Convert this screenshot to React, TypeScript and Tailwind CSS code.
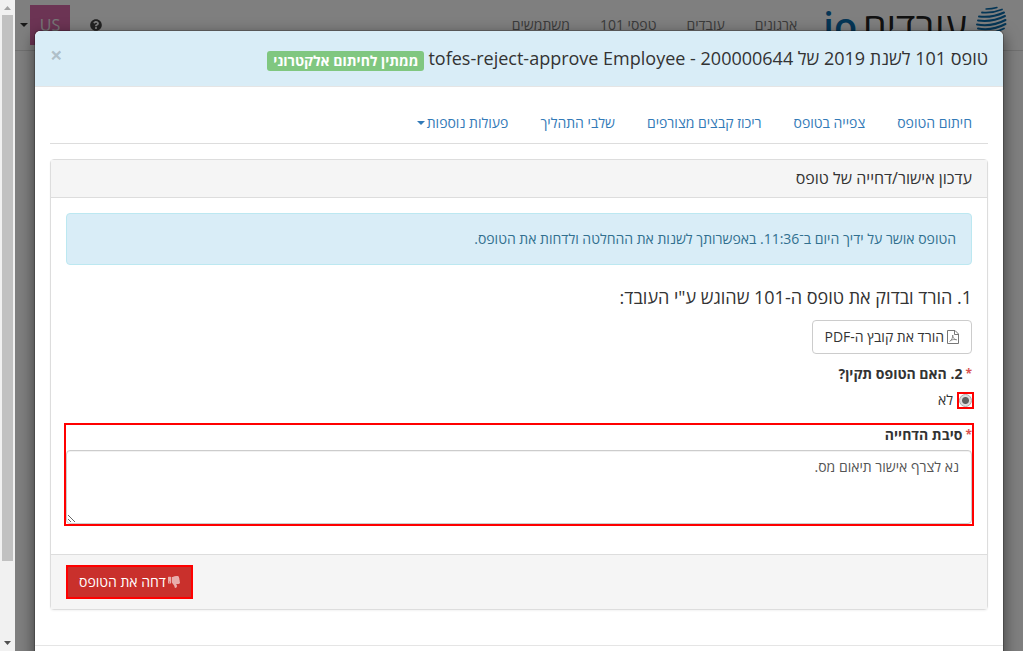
import { useState } from "react";
import { FaQuestionCircle, FaThumbsDown } from "react-icons/fa";

const menu = ["ארגונים", "עובדים", "טפסי 101", "משתמשים"];
const tabs = ["חיתום הטופס", "צפייה בטופס", "ריכוז קבצים מצורפים", "שלבי התהליך"];

function Globe() {
  return (
    <svg width="32" height="32" viewBox="0 0 32 32" fill="none" stroke="#0a6cac" strokeLinecap="round">
      <path d="M11 4 Q17 4 22 2.5" strokeWidth="1.4" />
      <path d="M7 7.5 Q17 8.5 27 4.5" strokeWidth="1.8" />
      <path d="M4 11.5 Q17 13 29 7.5" strokeWidth="2" />
      <path d="M3 15.5 Q17 17.5 30 11" strokeWidth="2" />
      <path d="M2 19.5 Q17 22 30.5 15" strokeWidth="2" />
      <path d="M3 23.5 Q17 26 30.5 19" strokeWidth="2" />
      <path d="M7 27.5 Q18 29 29 23.5" strokeWidth="1.8" />
    </svg>
  );
}

function Caret() {
  return (
    <svg width="8" height="4" viewBox="0 0 8 4" fill="currentColor">
      <path d="M0 0h8L4 4z" />
    </svg>
  );
}

function PdfIcon() {
  return (
    <svg width="12" height="14" viewBox="0 0 12 14" fill="none" stroke="#777">
      <path d="M.5 .5h7.500l3.500 3.500v9.500h-11z" />
      <path d="M7.500 .5v4h4" />
      <path d="M2.500 11.500c2-1 3.500-4 3.200-6.500c0 3 1.500 4.500 4 4.800c-2.500-.6-4.500-.2-6.200 .7" strokeWidth=".8" />
    </svg>
  );
}

function SiteHeader() {
  return (
    <header className="flex h-[51px] items-start border-b border-[#e0e0e0] bg-white pr-4 pl-[5px]">
      <a href="#" className="flex items-start gap-2">
        <span className="pt-[5px]">
          <Globe />
        </span>
        <span className="flex items-start gap-[6px] text-[38px] leading-[50px]">
          <span className="text-[#222]">עובדים</span>
          <span dir="ltr" className="font-semibold text-[#0a6cac]">io</span>
        </span>
      </a>
      <nav className="mr-[26px] flex gap-[30px] pt-[15px] text-sm text-[#777]">
        {menu.map((item) => (
          <a key={item} href="#">
            {item}
          </a>
        ))}
      </nav>
      <div className="mr-auto flex items-start">
        <a href="#" aria-label="עזרה" className="ml-5 pt-[19px] text-[#444]">
          <FaQuestionCircle size={12} />
        </a>
        <button className="flex items-center gap-[2px] pt-[5px]">
          <span className="flex size-10 items-center justify-center bg-[#d868a8] text-base text-[#eee]">US</span>
          <Caret />
        </button>
      </div>
    </header>
  );
}

function ScrollBar() {
  return (
    <div className="flex w-[15px] shrink-0 flex-col items-center justify-between bg-[#f1f1f1]">
      <svg width="15" height="15" viewBox="0 0 15 15" fill="#a3a3a3">
        <path d="M4 10h7L7.500 6z" />
      </svg>
      <div className="flex w-[11px] flex-1 flex-col">
        <div className="h-[88%] bg-[#c1c1c1]" />
      </div>
      <svg width="15" height="15" viewBox="0 0 15 15" fill="#505050">
        <path d="M4 5h7L7.500 9z" />
      </svg>
    </div>
  );
}

function Required() {
  return <span className="text-xs leading-5 font-bold text-[#d9534f]">*</span>;
}

function RejectPanel() {
  const [reason, setReason] = useState("נא לצרף אישור תיאום מס.");

  return (
    <section className="mt-[15px] mb-5 rounded border border-[#ddd] bg-white shadow-xs">
      <h3 className="border-b border-[#ddd] bg-[#f5f5f5] px-[15px] py-[10px] text-base leading-[17px]">
        עדכון אישור/דחייה של טופס
      </h3>
      <div className="p-[15px]">
        <div className="mb-5 rounded border border-[#bce8f1] bg-[#d9edf7] p-[15px] text-[#31708f]">
          הטופס אושר על ידיך היום ב־11:36. באפשרותך לשנות את ההחלטה ולדחות את הטופס.
        </div>
        <h4 className="mb-[10px] text-lg leading-[25px]">1. הורד ובדוק את טופס ה-101 שהוגש ע"י העובד:</h4>
        <button className="flex items-center gap-[3px] rounded border border-[#ccc] bg-white px-3 py-[6px]">
          <PdfIcon />
          הורד את קובץ ה-PDF
        </button>
        <fieldset className="mt-[10px]">
          <legend className="mb-[6px] flex gap-[3px] font-bold">
            <Required /> 2. האם הטופס תקין?
          </legend>
          <label className="flex items-center gap-[6px]">
            <span className="flex outline-2 outline-[#f00]">
              <input
                type="radio"
                name="valid"
                defaultChecked
                className="size-[13px] appearance-none rounded-full border border-[#aaa] bg-[radial-gradient(circle,#606060_3px,#dedede_4px)]"
              />
            </span>
            לא
          </label>
        </fieldset>
        <div className="my-[15px] outline-2 outline-[#f00]">
          <label htmlFor="reason" className="mb-[5px] flex gap-[3px] font-bold">
            <Required /> סיבת הדחייה
          </label>
          <textarea
            id="reason"
            rows={3}
            value={reason}
            onChange={(e) => setReason(e.target.value)}
            className="block w-full rounded border border-[#ccc] px-3 py-[6px] text-[#555] inset-shadow-2xs"
          />
        </div>
      </div>
      <div className="flex justify-end border-t border-[#ddd] bg-[#f5f5f5] px-[15px] py-[10px]">
        <button className="flex items-center gap-[2px] border-2 border-[#f00] bg-[#c9302c] px-[11px] py-[5px] text-white">
          <FaThumbsDown size={12} className="text-white/60" />
          דחה את הטופס
        </button>
      </div>
    </section>
  );
}

export default function App() {
  return (
    <div
      dir="rtl"
      className="flex h-screen overflow-hidden font-['Open_Sans','Noto_Sans',sans-serif] text-sm leading-5 text-[#333]"
    >
      <div className="relative min-w-0 flex-1 overflow-hidden bg-white">
        <SiteHeader />
        <div className="absolute inset-0 overflow-hidden bg-black/50">
          <div
            role="dialog"
            aria-labelledby="title"
            className="mx-[19px] mt-[30px] rounded-md border border-black/20 bg-white bg-clip-padding shadow-[0_5px_15px_rgba(0,0,0,0.5)]"
          >
            <div className="flex items-start justify-between rounded-t-md border-b border-[#e5e5e5] bg-[#d9edf7] p-[15px]">
              <h2 id="title" className="flex items-end gap-1 text-lg leading-[25px]">
                <span>טופס 101 לשנת 2019 של tofes-reject-approve Employee - 200000644</span>
                <span className="rounded-[3px] bg-[#80c780] px-[6px] text-sm leading-5 font-bold text-white">
                  ממתין לחיתום אלקטרוני
                </span>
              </h2>
              <button aria-label="סגירה" className="text-[22px] leading-4 font-bold text-black/20">
                ×
              </button>
            </div>
            <div className="p-[15px]">
              <nav className="flex border-b border-[#ddd] text-[#337ab7]">
                {tabs.map((tab) => (
                  <a key={tab} href="#" className="px-4 pt-[11px] pb-[10px]">
                    {tab}
                  </a>
                ))}
                <a href="#" className="flex items-center gap-[2px] px-4 pt-[11px] pb-[10px]">
                  פעולות נוספות
                  <Caret />
                </a>
              </nav>
              <RejectPanel />
            </div>
            <div className="h-16 border-t border-[#e5e5e5]" />
          </div>
        </div>
      </div>
      <ScrollBar />
    </div>
  );
}
